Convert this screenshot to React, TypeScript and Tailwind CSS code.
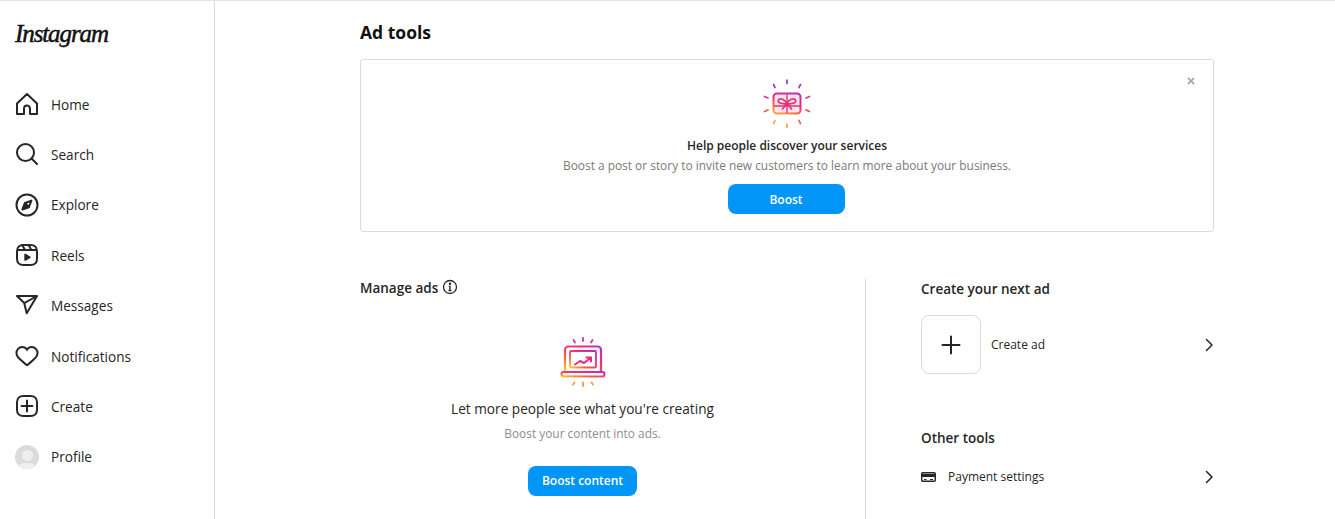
import React from 'react';

function HomeIcon() {
  return (
    <svg width="24" height="24" viewBox="0 0 24 24" fill="none" stroke="#262626" strokeWidth="2" strokeLinejoin="round">
      <path d="M9.005 16.545a2.997 2.997 0 0 1 2.997-2.997A2.997 2.997 0 0 1 15 16.545V22h7V11.543L12 2 2 11.543V22h7.005Z" />
    </svg>
  );
}

function SearchIcon() {
  return (
    <svg width="24" height="24" viewBox="0 0 24 24" fill="none" stroke="#262626" strokeWidth="2" strokeLinecap="round" strokeLinejoin="round">
      <path d="M19 10.5A8.5 8.5 0 1 1 10.5 2a8.5 8.5 0 0 1 8.5 8.5Z" />
      <line x1="16.511" y1="16.511" x2="22" y2="22" />
    </svg>
  );
}

function ExploreIcon() {
  return (
    <svg width="24" height="24" viewBox="0 0 24 24" fill="none" stroke="#262626" strokeWidth="2" strokeLinejoin="round">
      <polygon points="13.941 13.953 7.581 16.424 10.06 10.056 16.42 7.585 13.941 13.953" />
      <polygon points="10.06 10.056 13.949 13.945 7.581 16.424 10.06 10.056" fill="#262626" />
      <circle cx="12" cy="12" r="10.5" />
    </svg>
  );
}

function ReelsIcon() {
  return (
    <svg width="24" height="24" viewBox="0 0 24 24" fill="none" stroke="#262626" strokeWidth="2" strokeLinejoin="round">
      <line x1="2.049" y1="7.002" x2="21.95" y2="7.002" />
      <line x1="13.504" y1="2.001" x2="16.362" y2="7.002" strokeLinecap="round" />
      <line x1="7.207" y1="2.11" x2="10.002" y2="7.002" strokeLinecap="round" />
      <path d="M2 12.001v3.449c0 2.849.698 4.006 1.606 4.945.94.908 2.098 1.607 4.946 1.607h6.896c2.848 0 4.006-.699 4.946-1.607.908-.939 1.606-2.096 1.606-4.945V8.552c0-2.848-.698-4.006-1.606-4.945C19.454 2.699 18.296 2 15.448 2H8.552c-2.848 0-4.006.699-4.946 1.607C2.698 4.546 2 5.704 2 8.552Z" />
      <path d="M9.763 17.664a.908.908 0 0 1-.454-.787V11.63a.909.909 0 0 1 1.364-.788l4.545 2.624a.909.909 0 0 1 0 1.575l-4.545 2.624a.91.91 0 0 1-.91 0Z" fill="#262626" stroke="none" />
    </svg>
  );
}

function MessagesIcon() {
  return (
    <svg width="24" height="24" viewBox="0 0 24 24" fill="none" stroke="#262626" strokeWidth="2" strokeLinejoin="round">
      <line x1="22" y1="3" x2="9.218" y2="10.083" />
      <polygon points="11.698 20.334 22 3.001 2 3.001 9.218 10.084 11.698 20.334" />
    </svg>
  );
}

function HeartIcon() {
  return (
    <svg width="24" height="24" viewBox="0 0 24 24" fill="#262626">
      <path d="M16.792 3.904A4.989 4.989 0 0 1 21.5 9.122c0 3.072-2.652 4.959-5.197 7.222-2.512 2.243-3.865 3.469-4.303 3.752-.477-.309-2.143-1.823-4.303-3.752C5.141 14.072 2.5 12.167 2.5 9.122a4.989 4.989 0 0 1 4.708-5.218 4.21 4.21 0 0 1 3.675 1.941c.84 1.175.98 1.763 1.12 1.763s.278-.588 1.11-1.766a4.17 4.17 0 0 1 3.679-1.938m0-2a6.04 6.04 0 0 0-4.797 2.127 6.052 6.052 0 0 0-4.787-2.127A6.985 6.985 0 0 0 .5 9.122c0 3.61 2.55 5.827 5.015 7.97.283.246.569.494.853.747l1.027.918a44.998 44.998 0 0 0 3.518 3.018 2 2 0 0 0 2.174 0 45.263 45.263 0 0 0 3.626-3.115l.922-.824c.293-.26.59-.519.885-.774 2.334-2.025 4.98-4.32 4.98-7.94a6.985 6.985 0 0 0-6.708-7.218Z" />
    </svg>
  );
}

function CreateIcon() {
  return (
    <svg width="24" height="24" viewBox="0 0 24 24" fill="none" stroke="#262626" strokeWidth="2" strokeLinecap="round" strokeLinejoin="round">
      <path d="M2 12v3.45c0 2.849.698 4.005 1.606 4.944.94.909 2.098 1.608 4.946 1.608h6.896c2.848 0 4.006-.7 4.946-1.608C21.302 19.455 22 18.3 22 15.45V8.552c0-2.849-.698-4.006-1.606-4.945C19.454 2.7 18.296 2 15.448 2H8.552c-2.848 0-4.006.699-4.946 1.607C2.698 4.547 2 5.703 2 8.552Z" />
      <line x1="6.545" y1="12.001" x2="17.455" y2="12.001" />
      <line x1="12.003" y1="6.545" x2="12.003" y2="17.455" />
    </svg>
  );
}

function AvatarIcon() {
  return (
    <div className="w-6 h-6 rounded-full bg-[#dbdbdb] overflow-hidden flex flex-col items-center">
      <div className="w-[11px] h-[11px] rounded-full bg-[#efefef] mt-[5px] shrink-0" />
      <div className="w-[18px] h-[12px] rounded-full bg-[#efefef] mt-[2px] shrink-0" />
    </div>
  );
}

function Chevron() {
  return (
    <svg width="16" height="16" viewBox="0 0 16 16" fill="none" stroke="#262626" strokeWidth="1.5" strokeLinecap="round" strokeLinejoin="round" className="-mr-[3px]">
      <path d="M5.5 2.5 11 8l-5.5 5.5" />
    </svg>
  );
}

function GiftIcon() {
  const rays = [
    { d: 'M24 1v3.500', c: '#8f3ac4' },
    { d: 'M10.500 5.500 12 8.500', c: '#9b3ac8' },
    { d: 'M37.500 5.500 36 8.500', c: '#a93ac4' },
    { d: 'M1.500 17.500 5 19', c: '#c43bb4' },
    { d: 'M46.500 17.500 43 19', c: '#d23a9c' },
    { d: 'M1.500 32.500 5 31', c: '#ee5552' },
    { d: 'M46.500 32.500 43 31', c: '#ee4a62' },
    { d: 'M12 41.500 10.500 44.500', c: '#fcb045' },
    { d: 'M36 41.500 37.500 44.500', c: '#f4665a' },
    { d: 'M24 45v3.500', c: '#fca63c' },
  ];
  return (
    <svg width="48" height="50" viewBox="0 0 48 50" fill="none">
      <defs>
        <linearGradient id="gift" x1="0.75" y1="0" x2="0.25" y2="1">
          <stop offset="0" stopColor="#b832b4" />
          <stop offset="0.45" stopColor="#ee2a7b" />
          <stop offset="0.8" stopColor="#f77737" />
          <stop offset="1" stopColor="#fc9c4a" />
        </linearGradient>
      </defs>
      {rays.map((r) => (
        <path key={r.d} d={r.d} stroke={r.c} strokeWidth="1.700" strokeLinecap="round" />
      ))}
      <rect x="10.500" y="14.500" width="27" height="20" rx="3.500" stroke="url(#gift)" strokeWidth="2" fill="#fde3ee" />
      <path d="M11 27h26M24 15v19" stroke="#e8306e" strokeWidth="1.300" />
      <path d="M24 24.500c-2-4-7-6-8.500-3.500s3 4.500 8.500 3.500Zm0 0c2-4 7-6 8.500-3.500s-3 4.500-8.500 3.500Zm0 0-5 6m5-6 5 6" stroke="#e8306e" strokeWidth="1.700" strokeLinejoin="round" />
    </svg>
  );
}

function LaptopIcon() {
  return (
    <svg width="46" height="50" viewBox="0 0 46 50" fill="none">
      <defs>
        <linearGradient id="lap" x1="1" y1="0" x2="0" y2="1">
          <stop offset="0" stopColor="#b02fd6" />
          <stop offset="0.3" stopColor="#f02a7f" />
          <stop offset="0.7" stopColor="#fb5a4a" />
          <stop offset="1" stopColor="#fdc830" />
        </linearGradient>
      </defs>
      <path d="M23 1v3M13.500 3l1.500 2.500M32.500 3 31 5.500" stroke="#d52fa4" strokeWidth="1.800" strokeLinecap="round" />
      <path d="M23 45.500v3.500M14.500 45.500 13 47.500M31.500 45.500 33 47.500" stroke="#fb9a3c" strokeWidth="1.800" strokeLinecap="round" />
      <path d="M5 34V13a3.500 3.500 0 0 1 3.500-3.500h29A3.500 3.500 0 0 1 41 13v21" stroke="url(#lap)" strokeWidth="2.200" />
      <rect x="10" y="14" width="26" height="16.500" rx="1" stroke="url(#lap)" strokeWidth="1.800" />
      <rect x="1.500" y="35" width="43" height="4.500" rx="2.200" stroke="url(#lap)" strokeWidth="2" fill="#fff" />
      <path d="M15 27.500l5-3.500 4 2 7-5.500M26.500 20.500H31V24.500" stroke="#ee2a7b" strokeWidth="2" strokeLinecap="round" strokeLinejoin="round" />
    </svg>
  );
}

function CardIcon() {
  return (
    <svg width="15" height="10" viewBox="0 0 15 10" fill="none">
      <rect x="0.700" y="0.700" width="13.600" height="8.600" rx="1" stroke="#262626" strokeWidth="1.400" />
      <rect x="0.700" y="2" width="13.600" height="3" fill="#262626" />
      <path d="M3 7.500h2.500M9 7.500h3" stroke="#262626" strokeWidth="1.200" />
    </svg>
  );
}

const navItems = [
  { label: 'Home', icon: <HomeIcon /> },
  { label: 'Search', icon: <SearchIcon /> },
  { label: 'Explore', icon: <ExploreIcon /> },
  { label: 'Reels', icon: <ReelsIcon /> },
  { label: 'Messages', icon: <MessagesIcon /> },
  { label: 'Notifications', icon: <HeartIcon /> },
  { label: 'Create', icon: <CreateIcon /> },
  { label: 'Profile', icon: <AvatarIcon /> },
];

export default function App() {
  return (
    <div className="h-[519px] w-[1335px] overflow-hidden bg-white border-t border-[#e4e4e4] flex font-['Open_Sans',sans-serif] text-[#262626]">
      <aside className="w-[215px] shrink-0 border-r border-[#dbdbdb] px-[15px]">
        <div className="h-[78.7px] pt-[15px] font-['Liberation_Serif',serif] italic text-[25px] leading-[36px] tracking-[-1.1px] text-[#111] [-webkit-text-stroke:0.5px_#111]">
          Instagram
        </div>
        <nav>
          {navItems.map((item) => (
            <div key={item.label} className="h-[50.4px] flex items-center gap-3 text-[13.6px]">
              <div className="-mt-[2px]">{item.icon}</div>
              <span>{item.label}</span>
            </div>
          ))}
        </nav>
      </aside>

      <main className="flex-1 pl-[145px] pr-[121px]">
        <h1 className="text-[17.5px] font-bold leading-[24px] mt-[19px] text-[#111]">Ad tools</h1>

        <section className="relative mt-[15px] h-[173px] border border-[#dbdbdb] rounded-[3px] flex flex-col items-center pt-[19px]">
          <svg width="8" height="8" viewBox="0 0 8 8" stroke="#ababab" strokeWidth="1.800" className="absolute right-[18px] top-[17px]">
            <path d="M1 1l6 6M7 1 1 7" />
          </svg>
          <GiftIcon />
          <h2 className="text-[12px] font-semibold leading-[18px] mt-[8px]">Help people discover your services</h2>
          <p className="text-[11.9px] leading-[18px] mt-[1px] text-[#7a7a7a]">
            Boost a post or story to invite new customers to learn more about your business.
          </p>
          <button className="mt-[10px] -ml-[2px] w-[117px] h-[30px] pt-[1px] rounded-lg bg-[#0095f6] text-white text-[12px] font-semibold">
            Boost
          </button>
        </section>

        <div className="flex mt-[47px]">
          <section className="w-[506px] h-[300px] border-r border-[#dbdbdb] pr-[60px]">
            <div className="flex items-center gap-[4px] h-[18px]">
              <h2 className="text-[13.5px] font-semibold leading-[18px]">Manage ads</h2>
              <svg width="16" height="16" viewBox="0 0 16 16" fill="none" stroke="#262626" strokeWidth="1.300" className="mb-[3px]">
                <circle cx="8" cy="8" r="6.500" />
                <path d="M6.800 7.300H8V11.500M6.500 11.500H9.500" />
                <circle cx="8" cy="4.800" r="0.600" fill="#262626" />
              </svg>
            </div>
            <div className="flex flex-col items-center mt-[40px]">
              <LaptopIcon />
              <p className="text-[13.650px] leading-[18px] mt-[13px]">Let more people see what you're creating</p>
              <p className="text-[11.900px] leading-[16px] mt-[7px] text-[#8e8e8e]">Boost your content into ads.</p>
              <button className="mt-[25px] w-[109px] h-[30px] rounded-lg bg-[#0095f6] text-white text-[12px] font-semibold">
                Boost content
              </button>
            </div>
          </section>

          <section className="flex-1 pl-[55px]">
            <h2 className="text-[13.5px] font-semibold leading-[18px] mt-[1px]">Create your next ad</h2>
            <div className="flex items-center mt-[17px]">
              <div className="w-[60px] h-[59px] border border-[#dbdbdb] rounded-lg flex items-center justify-center">
                <svg width="24" height="24" viewBox="0 0 24 24" fill="none" stroke="#262626" strokeWidth="2" strokeLinecap="round">
                  <path d="M12 3.500v17M3.500 12h17" />
                </svg>
              </div>
              <span className="ml-[10px] text-[12px] font-medium flex-1">Create ad</span>
              <Chevron />
            </div>
            <h2 className="text-[13.5px] font-semibold leading-[18px] mt-[55px]">Other tools</h2>
            <div className="flex items-center mt-[21px] h-[18px]">
              <CardIcon />
              <span className="ml-[12px] text-[12px] flex-1">Payment settings</span>
              <Chevron />
            </div>
          </section>
        </div>
      </main>
    </div>
  );
}
